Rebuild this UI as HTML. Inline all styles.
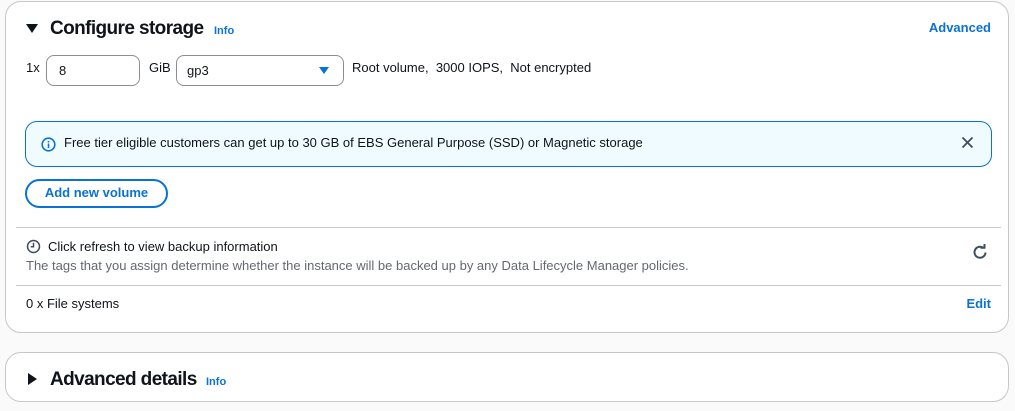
<!DOCTYPE html>
<html><head><style>
body{margin:0;width:1015px;height:411px;background:#fafafa;font-family:"Liberation Sans",sans-serif;font-size:13px;color:#0f141a;position:relative;overflow:hidden}
.p{position:absolute;left:5px;width:1004px;background:#fff;border:1px solid #c6c6cd;border-radius:16px;box-sizing:border-box}
.a{position:absolute;white-space:nowrap}
.lk{color:#0972d3;font-weight:bold}
.hr{position:absolute;left:10px;width:985px;height:1px;background:#c6c6cd}
.t{font-size:19px;font-weight:bold;letter-spacing:-0.6px}
</style></head><body>
<div class="p" style="top:1px;height:332px">
 <div class="a" style="left:20px;top:22px;width:0;height:0;border-left:6px solid transparent;border-right:6px solid transparent;border-top:9px solid #0f141a"></div>
 <div class="a t" style="left:44px;top:16px">Configure storage</div>
 <div class="a lk" style="left:208px;top:23px;font-size:11px">Info</div>
 <div class="a lk" style="right:17px;top:18px">Advanced</div>
 <div class="a" style="left:20px;top:58px">1x</div>
 <div class="a" style="left:40px;top:53px;width:94px;height:31px;border:1px solid #8c8c94;border-radius:8px;box-sizing:border-box;padding:7px 0 0 12px">8</div>
 <div class="a" style="left:143px;top:58px">GiB</div>
 <div class="a" style="left:170px;top:53px;width:168px;height:31px;border:1px solid #8c8c94;border-radius:8px;box-sizing:border-box;padding:7px 0 0 10px">gp3</div>
 <div class="a" style="left:313px;top:65px;border-left:5px solid transparent;border-right:5px solid transparent;border-top:7px solid #0972d3"></div>
 <div class="a" style="left:346px;top:58px">Root volume,&nbsp; 3000 IOPS,&nbsp; Not encrypted</div>
 <div class="a" style="left:19px;top:119px;width:967px;height:46px;background:#f0fbff;border:1px solid #0972d3;border-radius:12px;box-sizing:border-box"></div>
 <svg class="a" style="left:35px;top:135px" width="15" height="15" viewBox="0 0 15 15"><circle cx="7.5" cy="7.5" r="6.3" fill="none" stroke="#0972d3" stroke-width="1.6"/><path d="M7.5 6.5v4.5M7.5 4v1.5" stroke="#0972d3" stroke-width="1.6"/></svg>
 <div class="a" style="left:58px;top:133px">Free tier eligible customers can get up to 30 GB of EBS General Purpose (SSD) or Magnetic storage</div>
 <svg class="a" style="left:955px;top:134px" width="13" height="13"><path d="M1.5 1.5l10 10M11.5 1.5l-10 10" stroke="#414d5c" stroke-width="1.8"/></svg>
 <div class="a" style="left:19px;top:177px;width:143px;height:29px;border:2px solid #0972d3;border-radius:16px;box-sizing:border-box;text-align:center;line-height:23px" ><span class="lk">Add new volume</span></div>
 <div class="hr" style="top:225px"></div>
 <svg class="a" style="left:20px;top:237px" width="15" height="15" viewBox="0 0 15 15"><circle cx="7.5" cy="7.5" r="6" fill="none" stroke="#414d5c" stroke-width="1.5"/><path d="M7.5 3.8V7.8H4.8" fill="none" stroke="#414d5c" stroke-width="1.5"/></svg>
 <div class="a" style="left:42px;top:237px">Click refresh to view backup information</div>
 <div class="a" style="left:20px;top:256px;color:#656871">The tags that you assign determine whether the instance will be backed up by any Data Lifecycle Manager policies.</div>
 <svg class="a" style="left:965px;top:241px" width="18" height="18" viewBox="0 0 18 18"><path d="M14.5 9.5A5.5 5.5 0 1 1 12.5 5" fill="none" stroke="#414d5c" stroke-width="2"/><path d="M9.5 4.8h4V1" fill="none" stroke="#414d5c" stroke-width="2"/></svg>
 <div class="hr" style="top:283px"></div>
 <div class="a" style="left:20px;top:294px">0 x File systems</div>
 <div class="a lk" style="right:17px;top:294px">Edit</div>
</div>
<div class="p" style="top:352px;height:50px">
 <div class="a" style="left:22px;top:20px;border-top:6px solid transparent;border-bottom:6px solid transparent;border-left:9px solid #0f141a"></div>
 <div class="a t" style="left:44px;top:16px">Advanced details</div>
 <div class="a lk" style="left:200px;top:23px;font-size:11px">Info</div>
</div>
</body></html>
